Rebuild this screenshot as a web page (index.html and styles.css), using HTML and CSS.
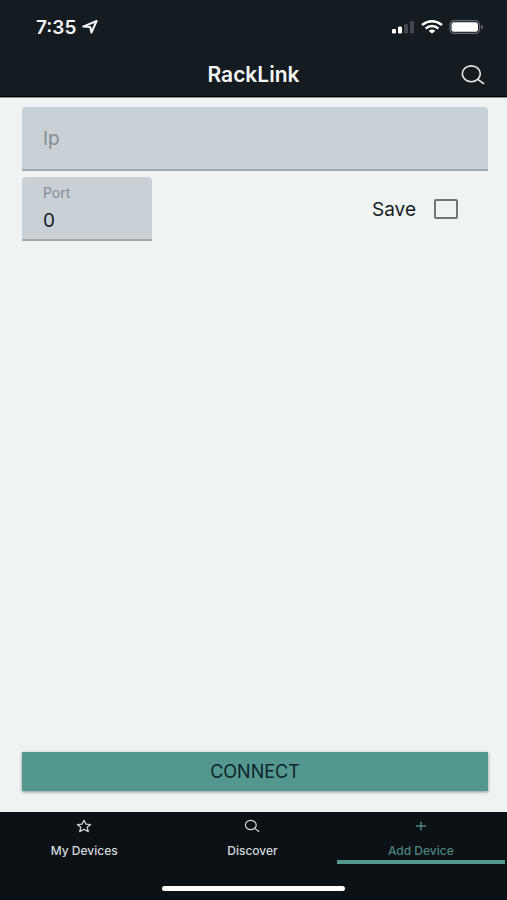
FILE: index.html
```html
<!DOCTYPE html>
<html lang="en">
<head>
<meta charset="utf-8">
<meta name="viewport" content="width=device-width, initial-scale=1">
<title>RackLink</title>
<link rel="stylesheet" href="styles.css">
</head>
<body>
<header class="top">
  <div class="status">
    <div class="clock">
      <span>7:35</span>
      <svg width="16" height="14" viewBox="0 0 16 14" aria-hidden="true"><path d="M1.2 6.6 14.6 1 9.4 12.6 8.3 7z" fill="none" stroke="#f4f6f7" stroke-width="2" stroke-linejoin="round"/></svg>
    </div>
    <div class="indicators">
      <svg width="24" height="14" viewBox="0 0 24 14" aria-hidden="true"><rect x="1" y="9" width="4" height="4.5" rx="1.3" fill="#fff"/><rect x="7" y="6.5" width="4" height="7" rx="1.3" fill="#fff"/><rect x="13" y="4" width="4" height="9.5" rx="1.3" fill="#41474d"/><rect x="19" y="1" width="4" height="12.5" rx="1.3" fill="#41474d"/></svg>
      <svg width="22" height="14" viewBox="0 0 22 14" aria-hidden="true"><g fill="none" stroke="#fff" stroke-width="2.5"><path d="M1 5Q11-2.4 21 5"/><path d="M4.6 8.5Q11 3.4 17.4 8.500"/></g><path d="M7.7 10.900Q11 8.300 14.300 10.900L11 13.600z" fill="#fff"/></svg>
      <svg width="34" height="14" viewBox="0 0 34 14" aria-hidden="true"><rect x="1" y="0.7" width="29.5" height="12.6" rx="4" fill="none" stroke="#666c71" stroke-width="1.2"/><rect x="2.500" y="2.200" width="26.500" height="9.600" rx="2.300" fill="#fff"/><path d="M32 4.7q1.8.5 1.8 2.3T32 9.3z" fill="#666c71"/></svg>
    </div>
  </div>
  <div class="bar">
    <h1>RackLink</h1>
    <button class="search" type="button" aria-label="Search">
      <svg width="24" height="20" viewBox="0 0 24 20" aria-hidden="true"><g fill="none" stroke="#e4e7e9" stroke-width="1.6" stroke-linecap="round"><ellipse cx="10.3" cy="8.8" rx="9" ry="7.9"/><path d="m16.8 14.3 5.7 4.2"/></g></svg>
    </button>
  </div>
</header>
<main>
  <form class="form">
    <div class="field">
      <input class="ip" type="text" placeholder="Ip" aria-label="Ip">
    </div>
    <div class="row">
      <div class="field port">
        <label for="port">Port</label>
        <input id="port" type="text" inputmode="numeric" value="0">
      </div>
      <label class="save">Save <input type="checkbox"></label>
    </div>
    <button class="connect" type="button">CONNECT</button>
  </form>
</main>
<footer class="bottom">
  <nav class="tabs">
    <a class="tab" href="#devices">
      <svg width="16" height="14" viewBox="0 0 16 14" aria-hidden="true"><path d="M8 1.3 9.9 5.1 14.6 5.5 11.2 8.3 12.3 12.6 8 10.3 3.7 12.6 4.8 8.3 1.4 5.5 6.1 5.1z" fill="none" stroke="currentColor" stroke-width="1.2" stroke-linejoin="round"/></svg>
      <span>My Devices</span>
    </a>
    <a class="tab" href="#discover">
      <svg width="16" height="14" viewBox="0 0 16 14" aria-hidden="true"><g fill="none" stroke="currentColor" stroke-width="1.2" stroke-linecap="round"><ellipse cx="6.8" cy="6" rx="5.4" ry="4.7"/><path d="m10.8 9.4 4 3.1"/></g></svg>
      <span>Discover</span>
    </a>
    <a class="tab active" href="#add" aria-current="page">
      <svg width="16" height="14" viewBox="0 0 16 14" aria-hidden="true"><path d="M3 7h10M8 2.7v8.6" fill="none" stroke="currentColor" stroke-width="1.6"/></svg>
      <span>Add Device</span>
    </a>
  </nav>
  <div class="home"></div>
</footer>
</body>
</html>
```
FILE: styles.css
```css
* {
  box-sizing: border-box;
}

body {
  margin: 0;
  min-height: 100vh;
  display: flex;
  flex-direction: column;
  background: #f0f3f3;
  color: #151c22;
  font-family: Inter, "Liberation Sans", sans-serif;
}

button,
input {
  font: inherit;
  color: inherit;
}

svg {
  display: block;
}

.top {
  background: #141b21;
  color: #f4f6f7;
  border-bottom: 1px solid #000;
  box-shadow: 0 1px 0 #8a8f93;
}

.status {
  display: flex;
  justify-content: space-between;
  align-items: center;
  height: 54px;
  padding: 0 24px 0 36px;
}

.clock {
  display: flex;
  align-items: center;
  gap: 6px;
  font-size: 19px;
  font-weight: 600;
}

.indicators {
  display: flex;
  align-items: center;
  gap: 6px;
}

.bar {
  display: grid;
  grid-template-columns: 1fr auto 1fr;
  align-items: center;
  height: 42px;
  padding: 0 22px;
}

h1 {
  grid-column: 2;
  margin: 0;
  font-size: 21px;
  font-weight: 600;
  line-height: 24px;
}

.search {
  justify-self: end;
  padding: 0;
  border: 0;
  background: none;
}

main {
  flex: 1;
  display: flex;
}

.form {
  flex: 1;
  display: flex;
  flex-direction: column;
  gap: 6px;
  padding: 10px 19px 21px 22px;
}

.field {
  display: flex;
  flex-direction: column;
  height: 64px;
  background: #c9d0d6;
  border-bottom: 2px solid #a2a7ac;
  border-radius: 4px 4px 0 0;
}

.field input {
  width: 100%;
  min-width: 0;
  padding: 0 21px;
  border: 0;
  outline: 0;
  background: none;
  font-size: 19px;
}

.ip {
  flex: 1;
}

.ip::placeholder {
  color: #858c91;
  opacity: 1;
}

.row {
  display: flex;
  justify-content: space-between;
  align-items: center;
}

.port {
  width: 28%;
  padding-top: 8px;
}

.port label {
  padding: 0 21px;
  color: #858d93;
  font-size: 14px;
  line-height: 16px;
}

.port input {
  height: 42px;
}

.save {
  display: flex;
  align-items: center;
  gap: 18px;
  padding-right: 30px;
  font-size: 19px;
}

.save input {
  appearance: none;
  width: 24px;
  height: 20px;
  margin: 0;
  border: 2px solid #737678;
  border-radius: 2px;
}

.connect {
  height: 39px;
  margin-top: auto;
  padding: 0;
  border: 0;
  background: #54978f;
  color: #10242a;
  font-size: 18px;
  box-shadow: 0 1px 3px #0006;
}

.bottom {
  background: #0c1115;
  color: #d5d9dc;
}

.tabs {
  display: grid;
  grid-template-columns: repeat(3, 1fr);
  padding-right: 2px;
}

.tab {
  display: flex;
  flex-direction: column;
  align-items: center;
  gap: 11px;
  height: 52px;
  padding-top: 7px;
  border-bottom: 4px solid transparent;
  color: inherit;
  font-size: 12px;
  font-weight: 500;
  line-height: 14px;
  text-decoration: none;
}

.active {
  border-color: #54978f;
  color: #4b867f;
}

.home {
  width: 36%;
  height: 5px;
  margin: 22px auto 9px;
  border-radius: 3px;
  background: #fff;
}
```
